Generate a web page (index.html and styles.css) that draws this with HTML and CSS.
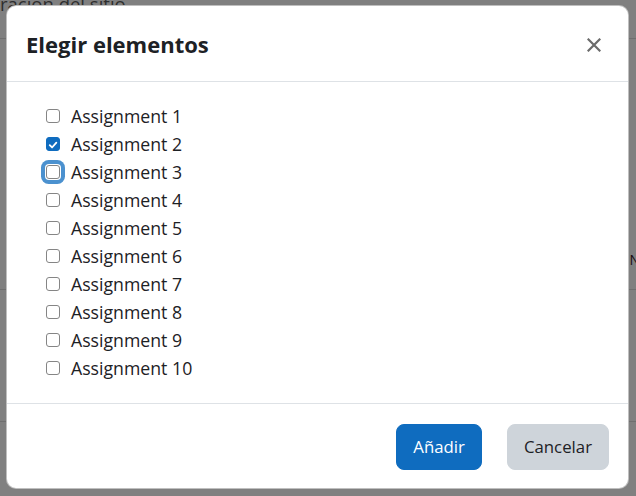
FILE: index.html
```html
<!DOCTYPE html>
<html lang="es">
<head>
<meta charset="utf-8">
<title>Elegir elementos</title>
<link rel="stylesheet" href="styles.css">
</head>
<body>
<div class="page">
  <div class="crumb">ración del sitio</div>
  <div class="rule rule-top"></div>
  <div class="row-n"><span class="n">N</span></div>
  <div class="rule rule-mid"></div>
  <div class="rule rule-low"></div>
</div>

<div class="modal" role="dialog" aria-labelledby="mt">
  <div class="modal-header">
    <h5 class="modal-title" id="mt">Elegir elementos</h5>
    <button class="close" aria-label="Cerrar">
      <svg width="14" height="14" viewBox="0 0 14 14"><path d="M1.5 1.5 L12.5 12.5 M12.5 1.5 L1.5 12.5" stroke="#6b6b6b" stroke-width="2.2" stroke-linecap="square"/></svg>
    </button>
  </div>
  <div class="modal-body">
    <label class="check"><span class="box"></span><span>Assignment 1</span></label>
    <label class="check"><span class="box checked"><svg width="14" height="14" viewBox="0 0 14 14"><path d="M3.2 7.2 L5.9 9.9 L10.9 4.2" fill="none" stroke="#fff" stroke-width="2.1" stroke-linecap="round" stroke-linejoin="round"/></svg></span><span>Assignment 2</span></label>
    <label class="check"><span class="box focused"></span><span>Assignment 3</span></label>
    <label class="check"><span class="box"></span><span>Assignment 4</span></label>
    <label class="check"><span class="box"></span><span>Assignment 5</span></label>
    <label class="check"><span class="box"></span><span>Assignment 6</span></label>
    <label class="check"><span class="box"></span><span>Assignment 7</span></label>
    <label class="check"><span class="box"></span><span>Assignment 8</span></label>
    <label class="check"><span class="box"></span><span>Assignment 9</span></label>
    <label class="check"><span class="box"></span><span>Assignment 10</span></label>
  </div>
  <div class="modal-footer">
    <button class="btn btn-primary">Añadir</button>
    <button class="btn btn-secondary">Cancelar</button>
  </div>
</div>
</body>
</html>
```

FILE: styles.css
```css
html, body {
  margin: 0;
  padding: 0;
}
body {
  width: 636px;
  height: 496px;
  overflow: hidden;
  background: #808080;
  font-family: "Open Sans", "Noto Sans", sans-serif;
  position: relative;
}
.page {
  display: flex;
  flex-direction: column;
}
.crumb {
  margin-top: -8px;
  font-size: 18.5px;
  color: #2e2e2e;
  line-height: 24px;
}
.rule {
  border-top: 1px solid #6f6f6f;
}
.rule-top {
  margin-top: 22px;
}
.row-n {
  margin-top: 214px;
  display: flex;
  justify-content: flex-end;
  height: 14px;
  overflow: hidden;
}
.n {
  font-size: 14px;
  line-height: 14px;
  color: #1a0c10;
  margin-right: -4px;
}
.rule-mid {
  margin-top: 22px;
}
.rule-low {
  margin-top: 131px;
}

.modal {
  position: absolute;
  left: 6px;
  top: 5px;
  width: 623px;
  box-sizing: border-box;
  background: #fff;
  border: 1px solid rgba(0,0,0,.25);
  border-radius: 10px;
  display: flex;
  flex-direction: column;
  color: #1d2125;
}
.modal-header {
  height: 75px;
  border-bottom: 1px solid #dee2e6;
  display: flex;
  align-items: center;
  justify-content: space-between;
  padding: 0 27px 0 19px;
}
.modal-title {
  margin: 0;
  font-size: 22px;
  font-weight: 700;
  line-height: 26px;
  color: #1d2125;
}
.close {
  border: 0;
  background: none;
  padding: 0;
  width: 14px;
  height: 14px;
  display: flex;
  margin-top: 2px;
}
.modal-body {
  padding: 20px 20px 21px 39px;
  display: flex;
  flex-direction: column;
}
.check {
  display: flex;
  align-items: center;
  height: 28px;
  font-size: 17.7px;
  color: #1d2125;
  gap: 11px;
}
.box {
  width: 14px;
  height: 14px;
  box-sizing: border-box;
  border: 1px solid #858585;
  border-radius: 3px;
  background: #fff;
  display: flex;
  flex: none;
}
.box.checked {
  background: #0f6cbf;
  border-color: #0f6cbf;
}
.box.focused {
  box-shadow: 0 0 0 1px #fff, 0 0 0 5px #4b91cf;
}
.modal-footer {
  height: 84px;
  border-top: 1px solid #dee2e6;
  display: flex;
  align-items: center;
  justify-content: flex-end;
  gap: 25px;
  padding: 0 19px;
}
.btn {
  height: 46px;
  border: 1px solid transparent;
  border-radius: 8px;
  font-family: inherit;
  font-size: 16.8px;
  padding: 0 16px;
  margin-top: 1px;
}
.btn-primary {
  background: #0f6cbf;
  border-color: #0f6cbf;
  color: #fff;
}
.btn-secondary {
  background: #ced4da;
  border-color: #ced4da;
  color: #1d2125;
}
```
